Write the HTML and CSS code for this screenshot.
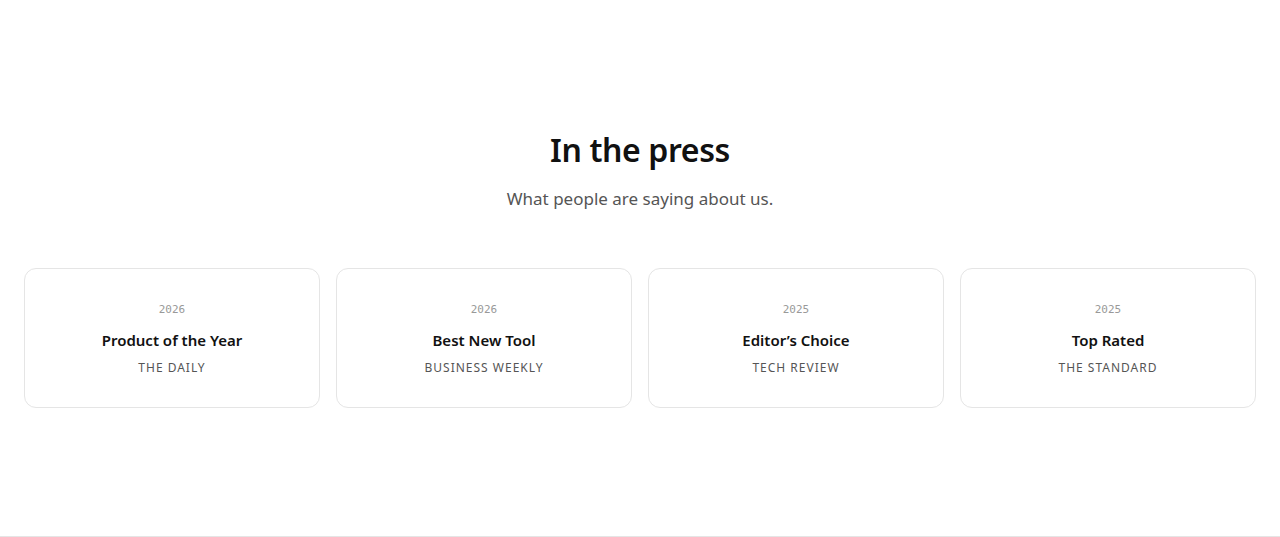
FILE: index.html
```html
<!DOCTYPE html>
<html lang="en">
<head>
    <meta charset="UTF-8">
    <meta name="viewport" content="width=device-width, initial-scale=1.0">
    <title>In the press</title>
    <link rel="stylesheet" href="styles.css">
</head>
<body>
    <section class="press">
        <h2 class="press-title">In the press</h2>
        <p class="press-subtitle">What people are saying about us.</p>
        <div class="press-grid">
            <div class="press-card">
                <span class="press-year">2026</span>
                <h3 class="press-award">Product of the Year</h3>
                <span class="press-source">The Daily</span>
            </div>
            <div class="press-card">
                <span class="press-year">2026</span>
                <h3 class="press-award">Best New Tool</h3>
                <span class="press-source">Business Weekly</span>
            </div>
            <div class="press-card">
                <span class="press-year">2025</span>
                <h3 class="press-award">Editor’s Choice</h3>
                <span class="press-source">Tech Review</span>
            </div>
            <div class="press-card">
                <span class="press-year">2025</span>
                <h3 class="press-award">Top Rated</h3>
                <span class="press-source">The Standard</span>
            </div>
        </div>
    </section>
    <footer class="footer"></footer>
</body>
</html>
```

FILE: styles.css
```css
body {
    font-family: "Noto Sans", "Open Sans", sans-serif;
    margin: 0;
    background-color: #fff;
    color: #111;
}
.press {
    padding: 128px 24px 128px;
    text-align: center;
    border-bottom: 1px solid #e5e5e5;
}
.press-title {
    margin: 0;
    font-size: 32px;
    line-height: 44px;
    font-weight: 600;
    letter-spacing: -0.4px;
    color: #111;
}
.press-subtitle {
    margin: 13px 0 0;
    font-size: 17px;
    line-height: 28px;
    color: #555;
}
.press-grid {
    display: grid;
    grid-template-columns: repeat(4, 1fr);
    gap: 16px;
    margin-top: 55px;
}
.press-card {
    display: flex;
    flex-direction: column;
    align-items: center;
    padding: 33px 16px 31px;
    border: 1px solid #e5e5e5;
    border-radius: 12px;
}
.press-year {
    font-family: "DejaVu Sans Mono", monospace;
    font-size: 11px;
    line-height: 16px;
    color: #999;
}
.press-award {
    margin: 10px 0 0;
    font-size: 15px;
    line-height: 24px;
    font-weight: 600;
    color: #111;
}
.press-source {
    margin-top: 8px;
    font-size: 12px;
    line-height: 16px;
    letter-spacing: 1px;
    text-transform: uppercase;
    color: #555;
}
```
